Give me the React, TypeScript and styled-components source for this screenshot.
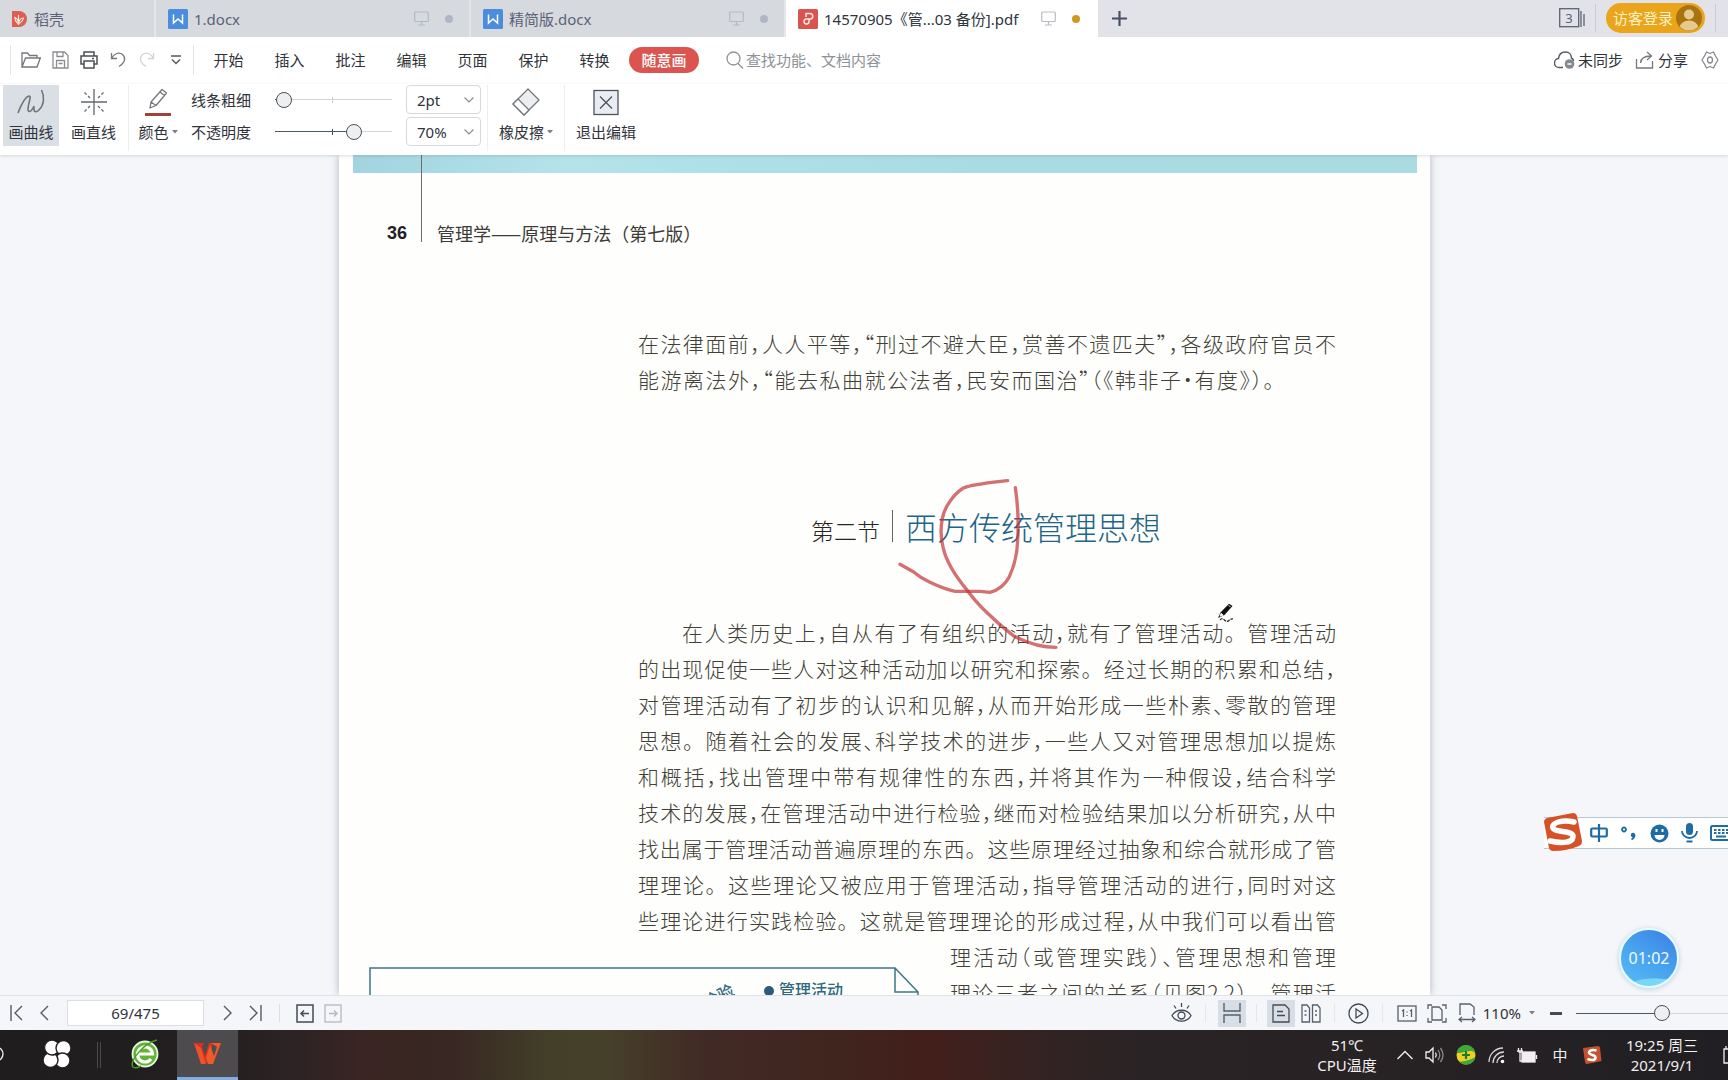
import React, { useState } from "react";
import styled, { createGlobalStyle, css } from "styled-components";

const ui = `"Noto Sans", "Noto Sans CJK SC", sans-serif`;
const cjk = `"Noto Sans CJK SC", "Noto Sans", sans-serif`;

const Global = createGlobalStyle`
  *, *::before, *::after { box-sizing: border-box; }
  body { margin: 0; font-family: ${ui}; font-size: 15px; line-height: 20px; color: #30333b; }
  button, input, select { font: inherit; color: inherit; margin: 0; }
  button { background: none; border: 0; padding: 0; cursor: pointer; }
  svg { display: block; flex: none; }
  p, h1, h2 { margin: 0; }
`;

const Screen = styled.div`
  display: flex;
  flex-direction: column;
  height: 100vh;
  overflow: hidden;
  position: relative;
`;

/* ---------- tab bar ---------- */

const TabBar = styled.nav`
  display: flex;
  height: 37px;
  flex: none;
  background: #e1e3e8;
`;

const Tab = styled.button<{ $width: number; $active?: boolean }>`
  display: flex;
  align-items: center;
  gap: 6px;
  width: ${(p) => p.$width}px;
  padding: 0 16px 0 12px;
  text-align: left;
  white-space: nowrap;
  background: ${(p) => (p.$active ? "#fff" : "#d6dade")};
  color: ${(p) => (p.$active ? "#2f3440" : "#5c6278")};
  border-right: 2px solid ${(p) => (p.$active ? "#fff" : "#e4e6ea")};
`;

const TabState = styled.span<{ $active?: boolean }>`
  display: flex;
  align-items: center;
  gap: 16px;
  margin-left: auto;
  color: ${(p) => (p.$active ? "#b9bcc2" : "#b4b8c4")};
  &::after {
    content: "";
    width: 8px;
    height: 8px;
    border-radius: 50%;
    background: ${(p) => (p.$active ? "#cb9a1f" : "#b0b5c6")};
  }
`;

const IconButton = styled.button<{ $width?: number; $on?: boolean }>`
  display: flex;
  align-items: center;
  justify-content: center;
  flex: none;
  width: ${(p) => p.$width ?? 24}px;
  height: 27px;
  background: ${(p) => (p.$on ? "#d8dee5" : "none")};
`;

const NewTab = styled(IconButton)`
  height: 100%;
`;

const TabBarEnd = styled.div`
  display: flex;
  align-items: center;
  margin-left: auto;
  padding: 0 12px 2px 0;
  gap: 10px;
`;

const Rule = styled.span<{ $height?: number; $color?: string }>`
  flex: none;
  width: 1px;
  height: ${(p) => p.$height ?? 28}px;
  background: ${(p) => p.$color ?? "#c8cbd1"};
`;

const LoginButton = styled.button`
  display: flex;
  align-items: center;
  justify-content: space-between;
  width: 99px;
  height: 30px;
  padding: 0 3px 0 7px;
  border-radius: 15px;
  background: #eaa51c;
  color: #fdf3c8;
`;

/* ---------- menu row ---------- */

const MenuRow = styled.div`
  display: flex;
  align-items: center;
  height: 47px;
  flex: none;
  padding: 0 8px 2px 10px;
  background: #fff;
`;

const QuickTools = styled.div`
  display: flex;
  align-items: center;
  gap: 2px;
  padding: 0 5px;
`;

const MenuItem = styled.button`
  width: 61px;
  height: 30px;
`;

const MenuItems = styled.div`
  display: flex;
  padding-left: 4px;
`;

const DrawPill = styled.button`
  width: 70px;
  height: 26px;
  margin-left: 4px;
  border-radius: 13px;
  background: #dc544f;
  color: #fff;
  font-weight: 500;
`;

const SearchBox = styled.label`
  display: flex;
  align-items: center;
  gap: 2px;
  margin-left: 27px;
  color: #8d9198;
  input {
    width: 200px;
    border: 0;
    padding: 0;
    outline: 0;
    background: none;
  }
  input::placeholder { color: #8d9198; opacity: 1; }
`;

const MenuEnd = styled.div`
  display: flex;
  align-items: center;
  gap: 12px;
  margin-left: auto;
`;

const TextButton = styled.button`
  display: flex;
  align-items: center;
  gap: 3px;
  white-space: nowrap;
`;

/* ---------- ribbon ---------- */

const Ribbon = styled.div`
  display: flex;
  height: 71px;
  flex: none;
  padding: 1px 3px;
  background: #fff;
  position: relative;
  z-index: 1;
  box-shadow: 0 1px 3px rgba(60, 70, 90, 0.18);
`;

const ToolButton = styled.button<{ $width: number; $on?: boolean }>`
  display: flex;
  flex-direction: column;
  align-items: center;
  justify-content: space-between;
  flex: none;
  width: ${(p) => p.$width}px;
  height: 61px;
  padding: 2px 0 4px;
  white-space: nowrap;
  background: ${(p) => (p.$on ? "#d9dfe5" : "none")};
`;

const ToolLabel = styled.span`
  display: flex;
  align-items: center;
  gap: 3px;
`;

const StrokeGrid = styled.div`
  display: grid;
  grid-template-columns: 70px 117px 75px;
  grid-auto-rows: 29px;
  column-gap: 14px;
  row-gap: 3px;
  align-items: center;
  align-content: start;
  margin: 0 6px 0 4px;
  label { white-space: nowrap; }
`;

const SliderTrack = styled.div<{ $tick?: boolean; $dark?: boolean }>`
  display: flex;
  align-items: center;
  ${(p) =>
    p.$tick &&
    css`
      background: linear-gradient(${p.$dark ? "#3f4a56" : "#c9ccd0"} 0 0) 57px center / 1px 6px no-repeat;
    `}
`;

const Range = styled.input<{ $fill: number }>`
  appearance: none;
  width: 100%;
  height: 18px;
  background: linear-gradient(
      to right,
      #4c5963 0 ${(p) => p.$fill}%,
      #d3d6d9 ${(p) => p.$fill}% 100%
    )
    center / 100% 1px no-repeat;
  &::-webkit-slider-thumb {
    appearance: none;
    width: 16px;
    height: 16px;
    border-radius: 50%;
    border: 1px solid #4b4f57;
    background: #eeeff1;
  }
`;

const SelectBox = styled.span`
  display: grid;
  align-items: center;
  & > * { grid-area: 1 / 1; }
  select {
    appearance: none;
    width: 75px;
    height: 29px;
    padding: 0 10px;
    border: 1px solid #d5d8dc;
    border-radius: 4px;
    background: #fff;
  }
  svg { justify-self: end; margin-right: 6px; pointer-events: none; }
`;

/* ---------- document ---------- */

const Workspace = styled.main`
  flex: 1;
  min-height: 0;
  overflow: hidden;
  display: flex;
  justify-content: center;
  padding-left: 41px;
  background: #f4f6fa;
`;

const Page = styled.article`
  position: relative;
  width: 1091px;
  flex: none;
  background: #fefefd;
  box-shadow: 0 0 8px rgba(70, 85, 100, 0.4);
  font-family: ${cjk};
`;

const PageBand = styled.div`
  height: 18px;
  margin: 0 13px 0 14px;
  background: linear-gradient(to right, #a3d3df, #b4e3ea 20%, #a9dbe2 60%, #aadbe1);
`;

const PageHeader = styled.header`
  display: flex;
  align-items: flex-end;
  height: 87px;
  margin-top: -18px;
  padding-left: 48px;
  font-size: 18px;
  line-height: 18px;
  color: #3c3b36;
  b {
    width: 34px;
    font-family: "Liberation Sans", sans-serif;
    font-size: 18px;
    color: #22211f;
  }
  span {
    display: flex;
    align-items: flex-end;
    height: 87px;
    padding-left: 15px;
    border-left: 1px solid #66706d;
    white-space: nowrap;
  }
`;

const Passage = styled.p<{ $top?: number }>`
  margin: ${(p) => p.$top ?? 0}px 94px 0 299px;
  font-size: 21px;
  font-weight: 300;
  line-height: 36px;
  color: #413f36;
  white-space: nowrap;
  font-feature-settings: "halt" 1;
`;

const Line = styled.span<{ $indent?: boolean; $short?: boolean }>`
  display: block;
  padding-left: ${(p) => (p.$indent ? 44 : 0)}px;
  padding-right: ${(p) => (p.$short ? 62 : 0)}px;
  text-align: justify;
  text-align-last: justify;
`;

const FullStop = styled.span`
  font-feature-settings: normal;
`;

const SectionTitle = styled.h2`
  display: flex;
  align-items: center;
  gap: 12px;
  margin: 106px 0 0 472px;
  height: 46px;
  font-weight: 300;
  white-space: nowrap;
  small { font-size: 23px; line-height: 30px; padding-top: 8px; color: #262522; }
  i { width: 1px; height: 32px; background: #5d6868; }
  strong { font-size: 32px; line-height: 44px; font-weight: 300; color: #1f6587; }
`;

const FigureRow = styled.div`
  display: flex;
  align-items: flex-start;
  padding-left: 30px;
  svg { margin-top: 29px; }
  ${Passage} { flex: 1; margin: 0 94px 0 31px; }
`;

const Annotation = styled.svg`
  position: absolute;
  left: 441px;
  top: 305px;
`;

const PenCursor = styled.svg`
  position: absolute;
  left: 878px;
  top: 448px;
`;

/* ---------- status bar ---------- */

const StatusBar = styled.footer`
  display: flex;
  align-items: center;
  height: 35px;
  flex: none;
  padding-left: 3px;
  border-top: 1px solid #dfe2e7;
  background: #f4f6fa;
  position: relative;
  z-index: 1;
`;

const PageInput = styled.input`
  width: 137px;
  height: 26px;
  margin: 0 7px;
  border: 1px solid #dadde2;
  background: #fff;
  text-align: center;
`;

const StatusEnd = styled.div`
  display: flex;
  align-items: center;
  gap: 6px;
  margin-left: auto;
`;

const ZoomSlider = styled.div`
  display: flex;
  width: 152px;
  margin-left: 4px;
`;

/* ---------- taskbar ---------- */

const TaskBar = styled.div`
  display: flex;
  height: 50px;
  flex: none;
  background: linear-gradient(
    to right,
    #1f1d1e, #231f20 12%, #2c2324 17%, #3a2523 21%, #382723 26%, #434029 32%, #46402a 35%,
    #412925 41%, #40261f 47%, #421f1b 54%, #332322 60%, #2a2325 66%, #272224 80%, #211f23
  );
  color: #f1efef;
`;

const TaskButton = styled.button<{ $width: number; $on?: boolean }>`
  display: flex;
  align-items: center;
  justify-content: center;
  width: ${(p) => p.$width}px;
  background: ${(p) => (p.$on ? "#4d4b4e" : "none")};
  border-bottom: 3px solid ${(p) => (p.$on ? "#82ade0" : "transparent")};
`;

const TaskDivider = styled.span`
  align-self: center;
  width: 4px;
  height: 26px;
  margin: 0 12px 0 4px;
  border: solid #4c494a;
  border-width: 0 1px;
`;

const Tray = styled.div`
  display: flex;
  align-items: center;
  margin-left: auto;
  white-space: nowrap;
`;

const TrayText = styled.div<{ $width: number }>`
  width: ${(p) => p.$width}px;
  text-align: center;
`;

const TrayIcons = styled.div`
  display: flex;
  align-items: center;
  gap: 12px;
  padding: 0 20px 0 18px;
`;

/* ---------- floating widgets ---------- */

const InputMethod = styled.div`
  position: absolute;
  right: 0;
  top: 817px;
  display: flex;
  align-items: center;
  gap: 12px;
  height: 32px;
  padding-left: 46px;
  border: solid #b9c7d3;
  border-width: 1px 0;
  background: #fff;
  color: #1f6ba5;
  z-index: 2;
`;

const SogouBadge = styled.svg`
  position: absolute;
  left: -2px;
  top: -7px;
`;

const Timer = styled.div`
  position: absolute;
  right: 49px;
  top: 928px;
  width: 60px;
  height: 60px;
  display: flex;
  align-items: center;
  justify-content: center;
  border: 2px solid #e4fbff;
  border-radius: 50%;
  background:
    radial-gradient(ellipse 26px 8px at 60% 100%, #79d6f8 0 90%, transparent 100%),
    linear-gradient(215deg, #3a7ee4, #48a2ee 50%, #58bdf6);
  box-shadow: 0 1px 5px rgba(80, 130, 170, 0.35);
  color: #eefaff;
  font-size: 16px;
  z-index: 2;
`;

/* ---------- icons ---------- */

type IconProps = { w?: number; h?: number; vb?: string; color?: string; sw?: number; children: React.ReactNode };
const Icon = ({ w = 20, h = 20, vb, color = "currentColor", sw = 1.3, children }: IconProps) => (
  <svg width={w} height={h} viewBox={vb ?? `0 0 ${w} ${h}`} fill="none" stroke={color} strokeWidth={sw} aria-hidden="true">
    {children}
  </svg>
);

const DocIcon = () => (
  <Icon sw={1.5} color="#fff">
    <rect width="20" height="20" rx="1.5" fill="#4a8ddc" stroke="none" />
    <path d="M5.500 5.500v8.500l4.500-4l4.500 4V5.500" />
  </Icon>
);
const PdfIcon = () => (
  <Icon sw={1.5} color="#fbe6e4">
    <rect width="20" height="20" rx="1.5" fill="#d9534f" stroke="none" />
    <path d="M8 8V4.500h4a2.700 2.700 0 0 1 0 5.500H8.500a2.500 2.500 0 1 0 2.500 2.500V10" />
  </Icon>
);
const MonitorIcon = () => (
  <Icon w={15} h={15} sw={1.2}>
    <rect x="0.700" y="1" width="13.600" height="9.500" rx="1" />
    <path d="M7.500 10.500v3.200M4 14h7" />
  </Icon>
);
const Chevron = () => (
  <Icon w={12} h={8} color="#8a8f97" sw={1.2}>
    <path d="M1.500 1.500L6 6l4.500-4.500" />
  </Icon>
);
const Caret = () => (
  <Icon w={6} h={4}>
    <path d="M0 0h6L3 3.500z" fill="#7b8088" stroke="none" />
  </Icon>
);

const menuItems = ["开始", "插入", "批注", "编辑", "页面", "保护", "转换"];

const bodyLines = [
  "在人类历史上，自从有了有组织的活动，就有了管理活动。管理活动",
  "的出现促使一些人对这种活动加以研究和探索。经过长期的积累和总结，",
  "对管理活动有了初步的认识和见解，从而开始形成一些朴素、零散的管理",
  "思想。随着社会的发展、科学技术的进步，一些人又对管理思想加以提炼",
  "和概括，找出管理中带有规律性的东西，并将其作为一种假设，结合科学",
  "技术的发展，在管理活动中进行检验，继而对检验结果加以分析研究，从中",
  "找出属于管理活动普遍原理的东西。这些原理经过抽象和综合就形成了管",
  "理理论。这些理论又被应用于管理活动，指导管理活动的进行，同时对这",
  "些理论进行实践检验。这就是管理理论的形成过程，从中我们可以看出管",
];

/* A full stop inside a line keeps its whole square; other marks take half. */
const setStops = (text: string) =>
  text.split("。").map((part, n) => (
    <React.Fragment key={n}>
      {n > 0 && <FullStop>。</FullStop>}
      {part}
    </React.Fragment>
  ));

function Tabs() {
  return (
    <TabBar aria-label="文档标签">
      <Tab $width={156}>
        <Icon w={16} h={20} vb="0 0 16 20" sw={1.2} color="#fbe9e4">
          <path d="M0 2h7a8 8 0 0 1 0 16H0z" fill="#dc5f50" stroke="none" />
          <path d="M6.500 15V6M6.500 15C3.500 13 3 11 3 8.500c2 1 3.500 3 3.500 6.500zM6.500 15c3-2 4.500-3 5-6c-2.500 0-4.500 2-5 6z" />
        </Icon>
        稻壳
      </Tab>
      <Tab $width={315}>
        <DocIcon />
        1.docx
        <TabState><MonitorIcon /></TabState>
      </Tab>
      <Tab $width={315}>
        <DocIcon />
        精简版.docx
        <TabState><MonitorIcon /></TabState>
      </Tab>
      <Tab $width={312} $active>
        <PdfIcon />
        14570905《管...03 备份].pdf
        <TabState $active><MonitorIcon /></TabState>
      </Tab>
      <NewTab $width={42} aria-label="新建标签">
        <Icon w={15} h={15} color="#4a4f68" sw={2.2}><path d="M7.500 0v15M0 7.500h15" /></Icon>
      </NewTab>
      <TabBarEnd>
        <button aria-label="窗口列表">
          <Icon w={26} h={20} color="#5d6273">
            <rect x="0.700" y="0.700" width="19" height="18" />
            <path d="M22 3v16M25 6v12" />
            <text x="10" y="15" textAnchor="middle" fontSize="13" fill="#5d6273" stroke="none">3</text>
          </Icon>
        </button>
        <Rule />
        <LoginButton>
          访客登录
          <Icon w={26} h={26}>
            <circle cx="13" cy="13" r="13" fill="#a9730f" stroke="none" />
            <circle cx="13" cy="9.500" r="5" fill="#e8c98c" stroke="none" />
            <path d="M4 22a9 6.500 0 0 1 18 0a13 13 0 0 1-18 0z" fill="#e8c98c" stroke="none" />
          </Icon>
        </LoginButton>
        <Rule />
      </TabBarEnd>
    </TabBar>
  );
}

function Menu() {
  return (
    <MenuRow>
      <Rule $height={30} $color="#e2e4e7" />
      <QuickTools>
        <IconButton $width={30} aria-label="打开">
          <Icon color="#74777c"><path d="M1 17V3h5.500l2 2.500H16V8M1 17L4.500 8H19.300L16 17z" /></Icon>
        </IconButton>
        <IconButton aria-label="保存">
          <Icon w={17} h={18} color="#8a8d92"><path d="M1 1h11.500L16 4.500V17H1zM4.500 17V9.500h8V17M5 1v4.500h6V1M6.500 12.500h4" /></Icon>
        </IconButton>
        <IconButton aria-label="打印" $width={30}>
          <Icon w={18} h={18} color="#4c4f54" sw={1.5}><path d="M4 5V1h10v4M4 13H1V5h16v8h-3M4 10h10v7H4zM12 7.500h2" /></Icon>
        </IconButton>
        <IconButton aria-label="撤销">
          <Icon w={16} h={17} color="#74777c"><path d="M1.500 2v5.500H7M1.500 7.500C4 2.500 9 .5 12.500 3.500s3 8-3.500 12" /></Icon>
        </IconButton>
        <IconButton aria-label="恢复" $width={30}>
          <Icon w={16} h={17} color="#d2d4d7"><path d="M14.500 2v5.500H9M14.500 7.500C12 2.500 7 .5 3.500 3.500s-3 8 3.500 12" /></Icon>
        </IconButton>
        <IconButton aria-label="更多">
          <Icon w={10} h={10} color="#55585e" sw={1.5}><path d="M0 1h10M1 4.500l4 4l4-4" /></Icon>
        </IconButton>
      </QuickTools>
      <Rule $height={30} $color="#e2e4e7" />
      <MenuItems>
        {menuItems.map((m) => <MenuItem key={m}>{m}</MenuItem>)}
      </MenuItems>
      <DrawPill>随意画</DrawPill>
      <SearchBox>
        <Icon w={18} h={18}><circle cx="7.500" cy="7.500" r="6.500" /><path d="M12 12.500l5 5" /></Icon>
        <input aria-label="查找" placeholder="查找功能、文档内容" />
      </SearchBox>
      <MenuEnd>
        <TextButton>
          <Icon w={21} h={18} color="#55585f" sw={1.5}>
            <path d="M9 16.500H5.500A4.500 4.500 0 0 1 4.500 7.500C5 3 8 1 11.500 1s6 2.500 6 6c1.500.7 2 2 2 3" />
            <circle cx="15.500" cy="13" r="4.800" fill="#85888e" stroke="none" />
            <path d="M13.500 13h4" stroke="#fff" />
          </Icon>
          未同步
        </TextButton>
        <TextButton>
          <Icon w={20} h={18} color="#74777c"><path d="M1.500 8v9h16V10M5.500 12C6 7.500 9 5 15.500 5M12 1l4.500 4L12 9" /></Icon>
          分享
        </TextButton>
        <IconButton $width={20} aria-label="设置">
          <Icon w={18} h={18} color="#85888e"><path d="M5.500 1L9 2.500L12.500 1L14.500 5L17 9l-2.500 4l-2 4L9 15.500L5.500 17l-2-4L1 9l2.500-4z" strokeLinejoin="round" /><ellipse cx="9" cy="9" rx="2.500" ry="3" /></Icon>
        </IconButton>
      </MenuEnd>
    </MenuRow>
  );
}

function Tools() {
  const [weight, setWeight] = useState(1);
  const [opacity, setOpacity] = useState(70);
  return (
    <Ribbon>
      <ToolButton $width={56} $on>
        <Icon w={30} h={30} color="#6c7580" sw={1.6}>
          <path d="M2 26C5 18 9 10 13 9c3-.5-1 8-1 13c0 4 3 3 5-1c1-2 1-2 1 1c0 4 3 3 5 1c5-5 6-13 2.500-20" />
        </Icon>
        画曲线
      </ToolButton>
      <ToolButton $width={69}>
        <Icon w={28} h={30} color="#62686f">
          <path d="M14 2v26M1 15h26" />
          <path d="M4.500 5.500l5.500 5.500M23.500 5.500L18 11M4.500 24.500L10 19M23.500 24.500L18 19" strokeDasharray="3 2" />
        </Icon>
        画直线
      </ToolButton>
      <Rule $height={66} $color="#eceef0" />
      <ToolButton $width={58}>
        <Icon w={28} h={30} color="#74777c">
          <path d="M7 15L18 2.500l4.500 3.500L12 18.500L6 21zM16 5l4.500 3.500M7 15l5 3.500" strokeLinejoin="round" />
          <path d="M1 27.500h26" stroke="#a1413b" strokeWidth="3" />
        </Icon>
        <ToolLabel>颜色<Caret /></ToolLabel>
      </ToolButton>
      <StrokeGrid>
        <label htmlFor="weight">线条粗细</label>
        <SliderTrack $tick>
          <Range id="weight" type="range" min={0} max={100} value={weight} $fill={weight} onChange={(e) => setWeight(+e.target.value)} />
        </SliderTrack>
        <SelectBox>
          <select aria-label="线条粗细" defaultValue="2pt"><option>2pt</option></select>
          <Chevron />
        </SelectBox>
        <label htmlFor="opacity">不透明度</label>
        <SliderTrack $tick $dark>
          <Range id="opacity" type="range" min={0} max={100} value={opacity} $fill={opacity} onChange={(e) => setOpacity(+e.target.value)} />
        </SliderTrack>
        <SelectBox>
          <select aria-label="不透明度" defaultValue="70%"><option>70%</option></select>
          <Chevron />
        </SelectBox>
      </StrokeGrid>
      <Rule $height={66} $color="#eceef0" />
      <ToolButton $width={76}>
        <Icon w={30} h={30} color="#74777c">
          <path d="M17 2L28 13L13 28L2 17z" fill="#eceef2" strokeLinejoin="round" />
          <path d="M2 17L7 12L18 23L13 28z" fill="#fff" strokeLinejoin="round" />
        </Icon>
        <ToolLabel>橡皮擦<Caret /></ToolLabel>
      </ToolButton>
      <Rule $height={66} $color="#eceef0" />
      <ToolButton $width={82}>
        <Icon w={26} h={30} color="#4d525c">
          <rect x="1" y="3.500" width="24" height="24" fill="#e9edf3" />
          <path d="M7 9.500l12 12M19 9.500l-12 12" />
        </Icon>
        退出编辑
      </ToolButton>
    </Ribbon>
  );
}

function Document() {
  return (
    <Workspace>
      <Page>
        <PageBand />
        <PageHeader>
          <b>36</b>
          <span>管理学——原理与方法（第七版）</span>
        </PageHeader>
        <Passage $top={83}>
          <Line>在法律面前，人人平等，“刑过不避大臣，赏善不遗匹夫”，各级政府官员不</Line>
          <Line $short>能游离法外，“能去私曲就公法者，民安而国治”（《韩非子·有度》）。</Line>
        </Passage>
        <SectionTitle>
          <small>第二节</small>
          <i />
          <strong>西方传统管理思想</strong>
        </SectionTitle>
        <Passage $top={65}>
          {bodyLines.map((l, n) => <Line key={l} $indent={n === 0}>{setStops(l)}</Line>)}
        </Passage>
        <FigureRow>
          <svg width="550" height="60" viewBox="0 0 550 60" fill="none" stroke="#3f7587" strokeWidth="1.5" role="img" aria-label="管理活动">
            <path d="M1 60V1H526L549 25V60M526 1V25H549" />
            <circle cx="400" cy="24" r="5" fill="#2b5a7c" stroke="none" />
            <text x="410" y="29" fontSize="16" fontWeight="500" fill="#2d6a80" stroke="none">管理活动</text>
            <text x="338" y="42" fontSize="16" fontWeight="500" fill="#2d6a80" stroke="none" transform="rotate(-28 338 42)">检验</text>
          </svg>
          <Passage>
            <Line>理活动（或管理实践）、管理思想和管理</Line>
            <Line>{setStops("理论三者之间的关系（见图2.2）。管理活")}</Line>
          </Passage>
        </FigureRow>
        <Annotation width="300" height="200" viewBox="0 0 900 600" fill="none" stroke="#c4383c" strokeOpacity=".72" strokeWidth="10" strokeLinecap="round" strokeLinejoin="round" aria-hidden="true">
          <path d="M683 62C640 67 580 72 550 84C525 100 495 135 487 175C482 200 482 235 490 265C500 310 540 365 565 395C590 430 645 485 700 527C740 548 780 562 828 562" />
          <path d="M360 313L400 335C420 352 430 358 450 367C475 379 500 389 525 394H600L630 397C655 390 675 375 688 350C702 320 712 280 713 240C716 190 713 130 706 83" />
        </Annotation>
        <PenCursor width="18" height="20" viewBox="0 0 18 20" aria-hidden="true">
          <path d="M1 15L3.500 9.500L12 .8L15.500 3L7.500 12z" fill="#111" />
          <path d="M3 13.200l1.200-3l2 2zM11.500 2.500l2 1.200" fill="#fff" stroke="#fff" strokeWidth=".8" />
          <path d="M3 17q2-2.500 4.500 0t4.500.500t4-1.500" fill="none" stroke="#222" strokeWidth="1.200" strokeDasharray="3 1" />
        </PenCursor>
      </Page>
    </Workspace>
  );
}

function Status() {
  const [zoom, setZoom] = useState(57);
  const [page, setPage] = useState("69/475");
  return (
    <StatusBar>
      <IconButton $width={26} aria-label="第一页"><Icon w={13} h={16} color="#555a62" sw={1.4}><path d="M1 0v16M12 1L5 8l7 7" /></Icon></IconButton>
      <IconButton $width={31} aria-label="上一页"><Icon w={9} h={16} color="#555a62" sw={1.4}><path d="M8 1L1 8l7 7" /></Icon></IconButton>
      <PageInput aria-label="页码" value={page} onChange={(e) => setPage(e.target.value)} />
      <IconButton $width={33} aria-label="下一页"><Icon w={9} h={16} color="#555a62" sw={1.4}><path d="M1 1l7 7l-7 7" /></Icon></IconButton>
      <IconButton $width={22} aria-label="最后一页"><Icon w={13} h={16} color="#555a62" sw={1.4}><path d="M12 0v16M1 1l7 7l-7 7" /></Icon></IconButton>
      <IconButton $width={26} as="span"><Rule $height={18} $color="#dcdfe4" /></IconButton>
      <IconButton $width={26} aria-label="后退"><Icon w={18} h={19} color="#454a55" sw={1.5}><rect x="1" y="1" width="16" height="17" /><path d="M13 9.500H5M8 6.500l-3 3l3 3" /></Icon></IconButton>
      <IconButton $width={30} aria-label="前进"><Icon w={18} h={19} color="#b5b8be"><rect x="1" y="1" width="16" height="17" /><path d="M5 9.500h8M10 6.500l3 3l-3 3" /></Icon></IconButton>
      <StatusEnd>
        <IconButton aria-label="护眼模式"><Icon w={21} h={20} color="#454a55"><path d="M1 12.500C5 5.500 16 5.500 20 12.500C16 20 5 20 1 12.500zM10.500 0v4M3 2.500l2 3M18 2.500l-2 3" /><circle cx="10.500" cy="12.500" r="3.500" /></Icon></IconButton>
        <IconButton $width={12} as="span"><Rule $height={18} $color="#e3e6ea" /></IconButton>
        <IconButton $width={28} $on aria-label="连续阅读"><Icon w={18} h={20} color="#5a606b" sw={1.4}><path d="M1 0v8h16V0M1 20v-8h16v8" /></Icon></IconButton>
        <IconButton $width={9} as="span"><Rule $height={18} $color="#e3e6ea" /></IconButton>
        <IconButton $width={28} $on aria-label="单页"><Icon w={18} h={19} color="#454a55"><path d="M1 1h12l4 4v13H1zM5 7.500h6M5 11.500h8" /></Icon></IconButton>
        <IconButton $width={20} aria-label="双页"><Icon w={20} h={19} color="#5a606b"><path d="M1 1h5l2.500 3v14H1zM11.500 1h5L19 4v14h-7.500zM3.500 7h2M3.500 11h2M14 7h2M14 11h2" /></Icon></IconButton>
        <IconButton $width={15} as="span"><Rule $height={18} $color="#e3e6ea" /></IconButton>
        <IconButton $width={22} aria-label="放映"><Icon w={21} h={21} color="#454a55"><circle cx="10.500" cy="10.500" r="9.500" /><path d="M8 6v9l6.500-4.500z" /></Icon></IconButton>
        <IconButton $width={14} as="span"><Rule $height={18} $color="#e3e6ea" /></IconButton>
        <IconButton $width={22} aria-label="实际大小"><Icon w={20} h={17} color="#5a606b"><rect x="1" y="1" width="18" height="15" /><path d="M5 6l1.500-1v7M13 6l1.500-1v7M10 6.500v1M10 10v1" /></Icon></IconButton>
        <IconButton $width={27} aria-label="适合页面"><Icon w={20} h={19} color="#5a606b"><path d="M5 3h7l3 3v10H5zM1 5V1h4M15 1h4v4M1 14v4h4M15 18h4v-4" /></Icon></IconButton>
        <IconButton $width={20} aria-label="适合宽度"><Icon w={18} h={20} color="#5a606b"><path d="M2 12V1h10l4 3v8M1 16.500h16M4 14l-3 2.500l3 2.500M14 14l3 2.500l-3 2.500" /></Icon></IconButton>
        <TextButton>110%<IconButton as="span" $width={16}><Caret /></IconButton></TextButton>
        <IconButton $width={20} aria-label="缩小"><Icon w={12} h={3} color="#454a55" sw={3}><path d="M0 1.500h12" /></Icon></IconButton>
        <ZoomSlider>
          <Range aria-label="缩放" type="range" min={0} max={100} value={zoom} $fill={zoom} onChange={(e) => setZoom(+e.target.value)} />
        </ZoomSlider>
      </StatusEnd>
    </StatusBar>
  );
}

function Task() {
  return (
    <TaskBar>
      <TaskButton $width={20} aria-label="搜索">
        <Icon w={20} h={20} color="#f1efef"><circle cx="-4" cy="10" r="7" /></Icon>
      </TaskButton>
      <TaskButton $width={73} aria-label="桌面助手">
        <Icon w={28} h={28} color="#231f20" sw={1.4}>
          <clipPath id="lobe"><rect width="12" height="17" /></clipPath>
          <g fill="#fff">
            <circle cx="9" cy="7.500" r="7.500" />
            <circle cx="20.500" cy="8" r="7.500" />
            <circle cx="19.500" cy="20.500" r="7.500" />
            <circle cx="7.500" cy="20" r="7.500" />
            <circle cx="9" cy="7.500" r="7.500" clipPath="url(#lobe)" />
          </g>
          <circle cx="14" cy="14" r="1.500" fill="#231f20" stroke="none" />
        </Icon>
      </TaskButton>
      <TaskDivider />
      <TaskButton $width={64} aria-label="浏览器">
        <Icon w={30} h={30}>
          <circle cx="15" cy="15" r="12.500" fill="#62b437" stroke="#e8f7df" strokeWidth="1.800" />
          <path d="M21 20a7.500 7.500 0 1 1 1.500-5H8.500" stroke="#fff" strokeWidth="3.200" />
          <path d="M3 28C-1 22 14 4 27 1M3 28c3 2 6 0 8-1" stroke="#4e9a2b" strokeWidth="1.500" />
        </Icon>
      </TaskButton>
      <TaskButton $width={61} $on aria-label="WPS">
        <Icon w={29} h={25}>
          <path d="M1 2h10l-2 4l3 9l4-13h4l-5 20h-6z" fill="#d7311f" stroke="none" />
          <path d="M18 2h10l-8 21h-5l-2-6l4-13l4 11l3-9z" fill="#ef5a2a" stroke="none" />
          <path d="M1 2l7 21h5l-5-16z" fill="#f0502a" stroke="none" />
        </Icon>
      </TaskButton>
      <Tray>
        <TrayText $width={64}>51℃<br />CPU温度</TrayText>
        <TrayIcons>
          <Icon w={16} h={10} color="#f1efef" sw={1.4}><path d="M.5 9L8 1.500L15.500 9" /></Icon>
          <Icon w={19} h={18} color="#f1efef"><path d="M1 6h3l4-4v14l-4-4H1zM10.500 6.500q1.500 2.500 0 5" /><path d="M13 4q3.500 5 0 10M15.500 2q5 7 0 14" opacity=".5" /></Icon>
          <Icon w={20} h={20}><circle cx="10" cy="10" r="9.500" fill="#f2cf28" stroke="none" /><path d="M.6 8A9.500 9.500 0 0 1 19.400 8C14 3 7 9 .6 8zM19.400 12A9.500 9.500 0 0 1 3 16.500c5 0 10-1 16.400-4.500z" fill="#3da63c" stroke="none" /><path d="M10 6v8M6 10h8" stroke="#1f7a2a" strokeWidth="2.200" /></Icon>
          <Icon w={17} h={17} color="#dad7d7"><path d="M1 15A14 14 0 0 1 15 1M5 16A11 11 0 0 1 16 5M9 16a7 7 0 0 1 7-7" /><circle cx="14.500" cy="14.500" r="1.800" fill="#fff" stroke="none" /></Icon>
          <Icon w={21} h={15} color="#f1efef"><rect x="5" y="4" width="13" height="10" fill="#f1efef" /><path d="M19.500 7v4M0 3h6M1.500 0v3q1.500 4 3 0V0M3 5v8h2" /></Icon>
          <TrayText $width={20}>中</TrayText>
          <Icon w={20} h={20}><path d="M1 3L16 1q2 0 2 2l1.500 13L5 19q-2 0-2-2z" fill="#c4512f" stroke="none" /><path d="M14.500 5.500C9 4 6 6.500 7.500 8.500S14 10 13.500 13S8 15 5.500 14" stroke="#fff" strokeWidth="2.600" /></Icon>
        </TrayIcons>
        <TrayText $width={80}>19:25 周三<br />2021/9/1</TrayText>
        <Icon w={26} h={20} color="#f1efef"><path d="M26 4h-4v14h4M24 1v3" /></Icon>
      </Tray>
    </TaskBar>
  );
}

export default function App() {
  return (
    <Screen>
      <Global />
      <Tabs />
      <Menu />
      <Tools />
      <Document />
      <Status />
      <Task />
      <InputMethod>
        <SogouBadge width="42" height="42" viewBox="0 0 42 42" fill="none" aria-hidden="true">
          <path d="M5 7L31 2q3 0 4 3l5 25q0 4-3 5q-12 5-26 5q-3 0-4-3L2 11q0-3 3-4z" fill="#d65226" />
          <path d="M32 11C20 8 9 12 11 17S32 19 31 26S17 32 8 30" stroke="#fff" strokeWidth="5.500" strokeLinecap="round" />
        </SogouBadge>
        <Icon w={18} h={18} sw={2.2}><rect x="1.200" y="4.500" width="15.600" height="8" rx="1" /><path d="M9 0v18" /></Icon>
        <Icon w={18} h={16} sw={1.8}><circle cx="4" cy="4.500" r="2" /><circle cx="13" cy="10" r="2.200" fill="currentColor" stroke="none" /><path d="M14.500 10q0 3-3 4.500" /></Icon>
        <Icon w={19} h={19}><circle cx="9.500" cy="9.500" r="9" fill="currentColor" stroke="none" /><path d="M6.500 5v3M12.500 5v3" stroke="#fff" strokeWidth="2" /><path d="M4.500 11h10a5 5 0 0 1-10 0z" fill="#fff" stroke="none" /></Icon>
        <Icon w={17} h={20} sw={1.8}><rect x="5" y="0" width="7" height="12" rx="3.500" fill="currentColor" stroke="none" /><path d="M1 8a7.500 7 0 0 0 15 0M5.500 18.500h6" /></Icon>
        <Icon w={18} h={16} sw={2}><rect x="1" y="1" width="18" height="14" rx="1.500" /><path d="M4 5h16M4 8h16" strokeDasharray="2.500 1.500" /><path d="M6 11.500h10" /></Icon>
      </InputMethod>
      <Timer>01:02</Timer>
    </Screen>
  );
}
